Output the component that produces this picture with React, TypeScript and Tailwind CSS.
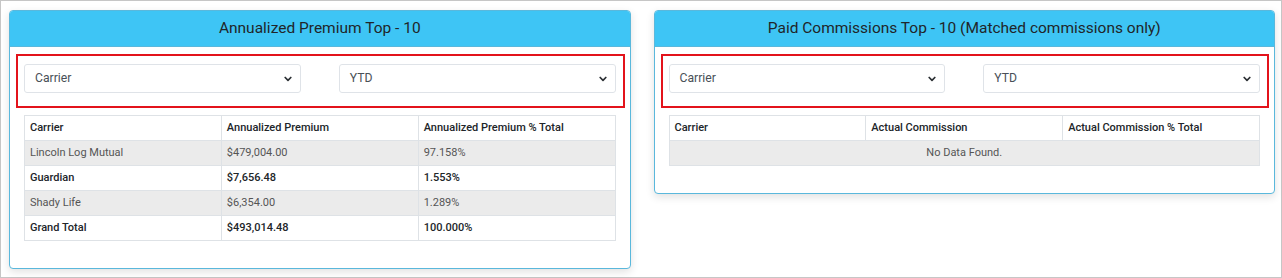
import React from "react";

const Chevron = () => (
  <svg width="8" height="6" viewBox="0 0 8 6" className="shrink-0">
    <path d="M1.2 1.5 L4 4.3 L6.8 1.5" fill="none" stroke="#2b2f33" strokeWidth="1.7" strokeLinecap="round" strokeLinejoin="round" />
  </svg>
);

const Select = ({ label }: { label: string }) => (
  <div className="h-[29px] flex items-center justify-between rounded-[3px] border border-[#dfe3e8] bg-white pl-[10px] pr-[8px] text-[12.2px] text-[#495057]">
    <span>{label}</span>
    <Chevron />
  </div>
);

type Row = { cells: string[]; striped: boolean };

const Card = ({
  title,
  headers,
  rows,
  empty,
}: {
  title: string;
  headers: string[];
  rows: Row[];
  empty?: string;
}) => (
  <div className="flex-1 rounded-[4px] border border-[#5ab8dc] bg-white shadow-[0_3px_8px_rgba(0,0,0,0.12)] overflow-hidden">
    <div className="h-[36px] bg-[#3ec5f5] border-b border-[#5ab8dc] flex items-center justify-center text-[15.5px] text-[#212529]">
      {title}
    </div>
    <div className="px-[14px] pt-[17px] pb-[27px]">
      <div className="relative">
        <div className="grid grid-cols-2 gap-[38px]">
          <Select label="Carrier" />
          <Select label="YTD" />
        </div>
        <div className="absolute top-[-10px] left-[-8px] right-[-9px] bottom-[-15px] border-2 border-[#e3131b]" />
      </div>
      <table className="mt-[22px] w-full table-fixed border-collapse text-[11px]">
        <thead>
          <tr>
            {headers.map((h) => (
              <th key={h} className="h-[25px] border border-[#dee2e6] px-[5px] text-left font-medium text-[#212529]">
                {h}
              </th>
            ))}
          </tr>
        </thead>
        <tbody>
          {rows.map((r, i) => (
            <tr key={i} className={r.striped ? "bg-[#ebebeb]" : "bg-white"}>
              {r.cells.map((c, j) => (
                <td
                  key={j}
                  className={
                    r.striped
                      ? "h-[25px] border border-[#dee2e6] px-[5px] text-[#555]"
                      : "h-[25px] border border-[#dee2e6] px-[5px] font-medium text-[#212529]"
                  }
                >
                  {c}
                </td>
              ))}
            </tr>
          ))}
          {empty && (
            <tr className="bg-[#ebebeb]">
              <td colSpan={3} className="h-[25px] border border-[#dee2e6] px-[5px] text-center text-[#555]">
                {empty}
              </td>
            </tr>
          )}
        </tbody>
      </table>
    </div>
  </div>
);

export default function App() {
  return (
    <div
      className="w-[1282px] h-[278px] border border-[#c6c6c6] bg-white pl-[8px] pr-[6px] pt-[9px] flex items-start gap-[23px]"
      style={{ fontFamily: "Roboto, 'Liberation Sans', sans-serif" }}
    >
      <Card
        title="Annualized Premium Top - 10"
        headers={["Carrier", "Annualized Premium", "Annualized Premium % Total"]}
        rows={[
          { cells: ["Lincoln Log Mutual", "$479,004.00", "97.158%"], striped: true },
          { cells: ["Guardian", "$7,656.48", "1.553%"], striped: false },
          { cells: ["Shady Life", "$6,354.00", "1.289%"], striped: true },
          { cells: ["Grand Total", "$493,014.48", "100.000%"], striped: false },
        ]}
      />
      <Card
        title="Paid Commissions Top - 10 (Matched commissions only)"
        headers={["Carrier", "Actual Commission", "Actual Commission % Total"]}
        rows={[]}
        empty="No Data Found."
      />
    </div>
  );
}
